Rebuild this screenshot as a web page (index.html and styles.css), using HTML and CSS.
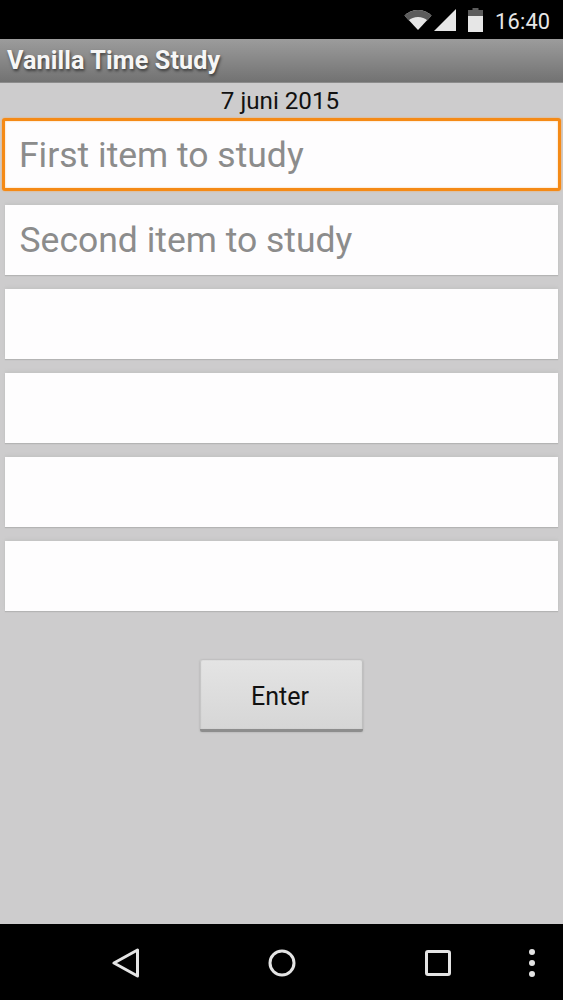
FILE: index.html
```html
<!DOCTYPE html>
<html lang="nl">
<head>
<meta charset="utf-8">
<title>Vanilla Time Study</title>
<link rel="stylesheet" href="styles.css">
</head>
<body>
<div class="phone">
  <header class="status">
    <svg class="ic-wifi" width="28" height="20" viewBox="0 0 28 20">
      <path d="M0.5 5.5C4 2 9 0 14 0s10 2 13.5 5.500L14 20z" fill="#e6e6e6"/>
      <path d="M0.500 5.500C4 2 9 0 14 0s10 2 13.500 5.500L23.600 10.500C21 8.300 17.700 7 14 7s-7 1.300-9.600 3.500z" fill="#5c5c5c"/>
    </svg>
    <svg class="ic-signal" width="22" height="22" viewBox="0 0 22 22"><path d="M22 0V22H0z" fill="#e6e6e6"/></svg>
    <svg class="ic-batt" width="15" height="24" viewBox="0 0 15 24">
      <path d="M4.500 0h6v2H15v8H0V2h4.500z" fill="#5c5c5c"/>
      <rect y="8" width="15" height="16" fill="#e6e6e6"/>
    </svg>
    <span class="clock">16:40</span>
  </header>
  <div class="titlebar"><span class="title">Vanilla Time Study</span></div>
  <main class="content">
    <div class="date">7 juni 2015</div>
    <div class="fields">
      <div class="field focused"><span class="hint">First item to study</span></div>
      <div class="field"><span class="hint">Second item to study</span></div>
      <div class="field"></div>
      <div class="field"></div>
      <div class="field"></div>
      <div class="field"></div>
    </div>
    <div class="actions"><button class="enter" type="button">Enter</button></div>
  </main>
  <nav class="navbar">
    <svg class="nav-back" width="28" height="30" viewBox="0 0 28 30"><path d="M25.500 2V28L2 15z" fill="none" stroke="#e4e4e4" stroke-width="3" stroke-linejoin="round"/></svg>
    <svg class="nav-home" width="28" height="28" viewBox="0 0 28 28"><circle cx="14" cy="14" r="12" fill="none" stroke="#e4e4e4" stroke-width="3"/></svg>
    <svg class="nav-recent" width="26" height="26" viewBox="0 0 26 26"><rect x="1.500" y="1.500" width="23" height="23" rx="1.500" fill="none" stroke="#e4e4e4" stroke-width="3"/></svg>
    <svg class="nav-more" width="8" height="30" viewBox="0 0 8 30"><circle cx="4" cy="4" r="3" fill="#e4e4e4"/><circle cx="4" cy="15" r="3" fill="#e4e4e4"/><circle cx="4" cy="26" r="3" fill="#e4e4e4"/></svg>
  </nav>
</div>
</body>
</html>
```
FILE: styles.css
```css
* { box-sizing: border-box; }
html, body { margin: 0; padding: 0; background: #000; }
body { font-family: Roboto, "Noto Sans", sans-serif; }
.phone { width: 563px; height: 1000px; display: flex; flex-direction: column; overflow: hidden; }

.status { height: 39px; background: #000; display: flex; align-items: center; padding-left: 404px; flex: none; }
.ic-wifi { margin-top: 1px; }
.ic-signal { margin-left: 2px; margin-top: 1px; }
.ic-batt { margin-left: 12px; margin-top: 1px; }
.clock { margin-left: 12px; color: #e6e6e6; font-size: 21.800px; margin-top: 3px; letter-spacing: 0.2px; }

.titlebar { height: 44px; flex: none; background: linear-gradient(#9c9c9c, #727272); border-bottom: 1px solid #8c8c8c; padding-left: 7px; display: flex; align-items: center; }
.title { color: #f6f6f6; font-size: 25.200px; font-weight: 700; text-shadow: 1px 2px 3px rgba(0,0,0,.55); margin-top: -1px; letter-spacing: 0.1px; }

.content { flex: 1; background: #cdcccd; display: flex; flex-direction: column; }
.date { height: 35px; text-align: center; font-size: 24.200px; color: #111; line-height: 36px; flex: none; padding-right: 3px; }
.fields { display: flex; flex-direction: column; gap: 14px; padding: 0 5px; }
.field { height: 70px; background: #fefdfe; box-shadow: 0 1px 1px #b4b4b4, 0 -2px 3px #c4c4c4, 0 0 1px #dcdcdc; display: flex; align-items: center; padding: 0 14.500px; }
.field.focused { height: 73px; margin: 0 -3px -0.500px; padding: 0 14px; border: 3px solid #f58a16; border-radius: 3px; box-shadow: 0 0 2px #f7a550, inset 0 0 2px #fbc88c; }
.hint { color: #8c8c8c; font-size: 35.500px; }

.actions { display: flex; justify-content: center; margin-top: 49px; padding-right: 1px; }
.enter { width: 163px; height: 72px; border: 0; border-bottom: 3px solid #8d8d8d; border-radius: 2px; background: linear-gradient(#e4e4e4, #d6d6d6); box-shadow: 0 0 2px #a0a0a0, inset 1px 0 1px #c4c4c4, inset -1px 0 1px #bcbcbc; font-family: inherit; font-size: 25px; color: #111; padding: 4px 2px 0 0; }

.navbar { height: 76px; flex: none; background: #000; display: flex; align-items: center; padding-top: 2px; position: relative; }
.nav-back { margin-left: 112px; }
.nav-home { margin-left: 128px; }
.nav-recent { margin-left: 129px; }
.nav-more { margin-left: 77px; }
```
